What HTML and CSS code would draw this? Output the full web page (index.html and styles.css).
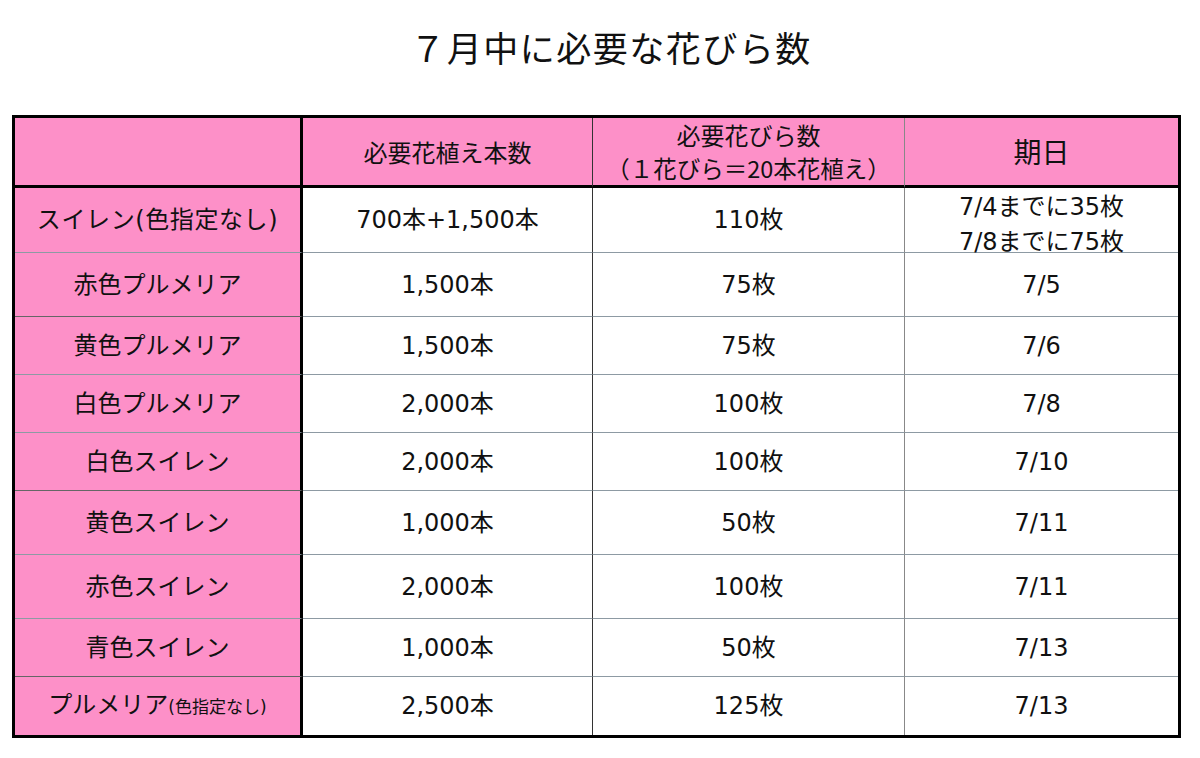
FILE: index.html
```html
<!DOCTYPE html>
<html lang="ja">
<head>
<meta charset="utf-8">
<title>7月中に必要な花びら数</title>
<link rel="stylesheet" href="styles.css">
</head>
<body>
<h1 class="title">７月中に必要な花びら数</h1>
<table class="grid">
  <tr class="head">
    <th class="c1"></th>
    <th class="c2">必要花植え本数</th>
    <th class="c3">必要花びら数<br><span class="sub">（１花びら＝20本花植え）</span></th>
    <th class="c4 big">期日</th>
  </tr>
  <tr class="h65">
    <td class="name wide">スイレン(色指定なし)</td>
    <td class="c2">700本+1,500本</td>
    <td class="c3">110枚</td>
    <td class="c4"><span class="two">7/4までに35枚<br>7/8までに75枚</span></td>
  </tr>
  <tr class="h64 dark">
    <td class="name">赤色プルメリア</td>
    <td class="c2">1,500本</td>
    <td class="c3">75枚</td>
    <td class="c4">7/5</td>
  </tr>
  <tr class="h58">
    <td class="name">黄色プルメリア</td>
    <td class="c2">1,500本</td>
    <td class="c3">75枚</td>
    <td class="c4">7/6</td>
  </tr>
  <tr class="h58">
    <td class="name">白色プルメリア</td>
    <td class="c2">2,000本</td>
    <td class="c3">100枚</td>
    <td class="c4">7/8</td>
  </tr>
  <tr class="h58 dark">
    <td class="name">白色スイレン</td>
    <td class="c2">2,000本</td>
    <td class="c3">100枚</td>
    <td class="c4">7/10</td>
  </tr>
  <tr class="h64">
    <td class="name">黄色スイレン</td>
    <td class="c2">1,000本</td>
    <td class="c3">50枚</td>
    <td class="c4">7/11</td>
  </tr>
  <tr class="h64">
    <td class="name">赤色スイレン</td>
    <td class="c2">2,000本</td>
    <td class="c3">100枚</td>
    <td class="c4">7/11</td>
  </tr>
  <tr class="h58 dark">
    <td class="name">青色スイレン</td>
    <td class="c2">1,000本</td>
    <td class="c3">50枚</td>
    <td class="c4">7/13</td>
  </tr>
  <tr class="h58 last">
    <td class="name">プルメリア<span class="small">(色指定なし)</span></td>
    <td class="c2">2,500本</td>
    <td class="c3">125枚</td>
    <td class="c4">7/13</td>
  </tr>
</table>
</body>
</html>
```

FILE: styles.css
```css
html, body {
  margin: 0;
  padding: 0;
  background: #ffffff;
}

body {
  font-family: "Noto Sans CJK JP", "Noto Sans", sans-serif;
  color: #111111;
}

.title {
  margin: 0;
  height: 115px;
  box-sizing: border-box;
  padding: 22px 0 0 22px;
  font-size: 35px;
  line-height: 50px;
  font-weight: 400;
  text-align: center;
  letter-spacing: 1.5px;
}

.grid {
  margin-left: 12px;
  width: 1169px;
  table-layout: fixed;
  border-collapse: separate;
  border-spacing: 0;
  border: 3px solid #000000;
  font-family: "DejaVu Sans", "Noto Sans CJK JP", sans-serif;
}

.grid th,
.grid td {
  box-sizing: border-box;
  padding: 0;
  text-align: center;
  vertical-align: middle;
  font-size: 24px;
  font-weight: 400;
  line-height: 34px;
  border-bottom: 1px solid #8d9aa3;
  white-space: nowrap;
}

.grid .c1,
.grid .name {
  width: 288px;
  background: #fd90c8;
  border-right: 3px solid #000000;
}

.grid .wide {
  letter-spacing: 0.6px;
}

.grid .c2 {
  width: 290px;
  border-right: 1px solid #333333;
}

.grid .c3 {
  width: 312px;
  border-right: 1px solid #888888;
}

.grid .c4 {
  width: 273px;
}

.head th {
  height: 68px;
  background: #fd90c8;
  border-bottom: 3px solid #000000;
  line-height: 33px;
  font-family: "Noto Sans CJK JP", sans-serif;
}

.head .sub {
  font-size: 23.5px;
}

.head th.big {
  font-size: 28px;
}

.h65 td { height: 65px; }
.h64 td { height: 64px; }
.h58 td { height: 58px; }

.dark td.name {
  border-bottom-color: #666666;
}

.last td {
  border-bottom: none;
}

.two {
  display: block;
  line-height: 35px;
  margin-top: 1px;
  margin-bottom: -9px;
}

.small {
  font-size: 17px;
}
```
